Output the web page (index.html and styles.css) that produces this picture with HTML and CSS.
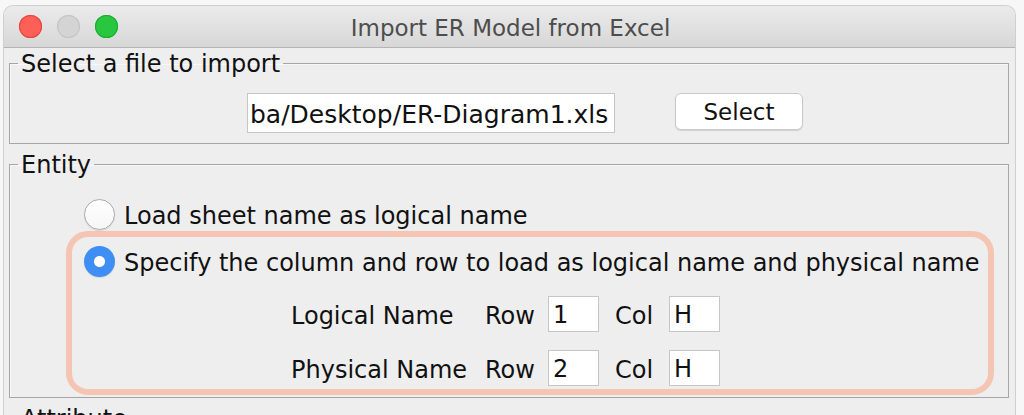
FILE: index.html
```html
<!DOCTYPE html>
<html lang="en">
<head>
  <meta charset="UTF-8" />
  <title>Import ER Model from Excel</title>
  <link rel="stylesheet" href="styles.css">
</head>
<body>
  <div class="window">
    <div class="titlebar">
      <div class="lights">
        <span class="light red"></span>
        <span class="light gray"></span>
        <span class="light green"></span>
      </div>
      <div class="title">Import ER Model from Excel</div>
    </div>

    <div class="content">
      <fieldset class="group">
        <legend>Select a file to import</legend>
        <div class="file-row">
          <div class="field path">ba/Desktop/ER-Diagram1.xls</div>
          <button class="btn">Select</button>
        </div>
      </fieldset>

      <fieldset class="group">
        <legend>Entity</legend>
        <div class="radio-row first">
          <span class="radio"></span>
          <span class="text">Load sheet name as logical name</span>
        </div>
        <div class="highlight">
          <div class="radio-row">
            <span class="radio checked"></span>
            <span class="text">Specify the column and row to load as logical name and physical name</span>
          </div>
          <div class="cell-row">
            <span class="name">Logical Name</span>
            <span class="lbl-row">Row</span>
            <div class="field small">1</div>
            <span class="lbl-col">Col</span>
            <div class="field small">H</div>
          </div>
          <div class="cell-row">
            <span class="name">Physical Name</span>
            <span class="lbl-row">Row</span>
            <div class="field small">2</div>
            <span class="lbl-col">Col</span>
            <div class="field small">H</div>
          </div>
        </div>
      </fieldset>

      <fieldset class="group">
        <legend>Attribute</legend>
        <div class="spacer"></div>
      </fieldset>
    </div>
  </div>
</body>
</html>
```

FILE: styles.css
```css
body {
  margin: 0;
  background-color: #f7f7f7;
  font-family: "DejaVu Sans", sans-serif;
  font-size: 24px;
  color: #111;
  overflow: hidden;
}

.window {
  margin: 5px 0 0 3px;
  width: 1011px;
  height: 430px;
  border: 1px solid #cfcfcf;
  border-bottom: none;
  border-radius: 10px 10px 0 0;
  background-color: #eeeeee;
  overflow: hidden;
}

.titlebar {
  position: relative;
  height: 41px;
  background: linear-gradient(#ebebeb, #d7d7d7);
  border-bottom: 1px solid #b4b4b4;
  display: flex;
  align-items: center;
  justify-content: center;
}

.lights {
  position: absolute;
  left: 15px;
  top: 9px;
  display: flex;
  gap: 15px;
}

.light {
  width: 23px;
  height: 23px;
  border-radius: 50%;
}

.red {
  background-color: #fe5f57;
  box-shadow: inset 0 0 0 1px #e2463f;
}

.gray {
  background-color: #d4d4d4;
  box-shadow: inset 0 0 0 1px #c4c4c4;
}

.green {
  background-color: #29c73f;
  box-shadow: inset 0 0 0 1px #1dad2c;
}

.title {
  color: #4d4d4d;
  font-size: 23px;
  margin: 2px 0 0 2px;
}

.content {
  padding: 2px 6px 0 5px;
}

.group {
  margin: 0 0 7px 0;
  padding: 0;
  border: 1px solid #a6a6a6;
  box-shadow: inset 1px 1px 0 #f8f8f8;
}

.group legend {
  margin-left: 8px;
  padding: 2px 3px 0;
  line-height: 24px;
}

.file-row {
  display: flex;
  align-items: center;
  padding: 17px 0 10px 237px;
}

.field {
  background-color: #ffffff;
  border: 1px solid #c6c6c6;
  box-sizing: border-box;
  display: flex;
  align-items: center;
  padding-top: 2px;
}

.path {
  width: 368px;
  height: 40px;
  padding-left: 2px;
  font-size: 25px;
}

.btn {
  margin-left: 60px;
  width: 128px;
  height: 37px;
  margin-top: -3px;
  padding-top: 2px;
  font-family: inherit;
  font-size: 23px;
  color: #111;
  background-color: #ffffff;
  border: 1px solid #c9c9c9;
  border-radius: 6px;
  box-shadow: 0 1px 1px rgba(0, 0, 0, 0.12);
}

.radio-row {
  display: flex;
  align-items: center;
  gap: 9px;
  height: 34px;
}

.radio-row.first {
  padding: 20px 0 0 74px;
}

.text {
  padding-top: 3px;
}

.radio {
  width: 31px;
  height: 31px;
  box-sizing: border-box;
  border-radius: 50%;
  background: linear-gradient(#ffffff, #f6f6f6);
  border: 1px solid #ababab;
  box-shadow: 0 1px 1px rgba(0, 0, 0, 0.1);
}

.radio.checked {
  border: none;
  background: radial-gradient(circle, #ffffff 0 5px, #3f8ef3 6px);
}

.highlight {
  margin: 0 14px 2px 56px;
  padding: 7px 0 3px 12px;
  border: 6px solid #f5c5b4;
  border-radius: 22px;
}

.cell-row {
  display: flex;
  align-items: center;
  margin-top: 18px;
  padding-left: 207px;
}

.cell-row span {
  padding-top: 3px;
}

.name {
  width: 194px;
}

.lbl-row {
  width: 63px;
}

.lbl-col {
  margin-left: 16px;
  width: 54px;
}

.small {
  width: 51px;
  height: 36px;
  padding-left: 4px;
}

.spacer {
  height: 40px;
}
```
